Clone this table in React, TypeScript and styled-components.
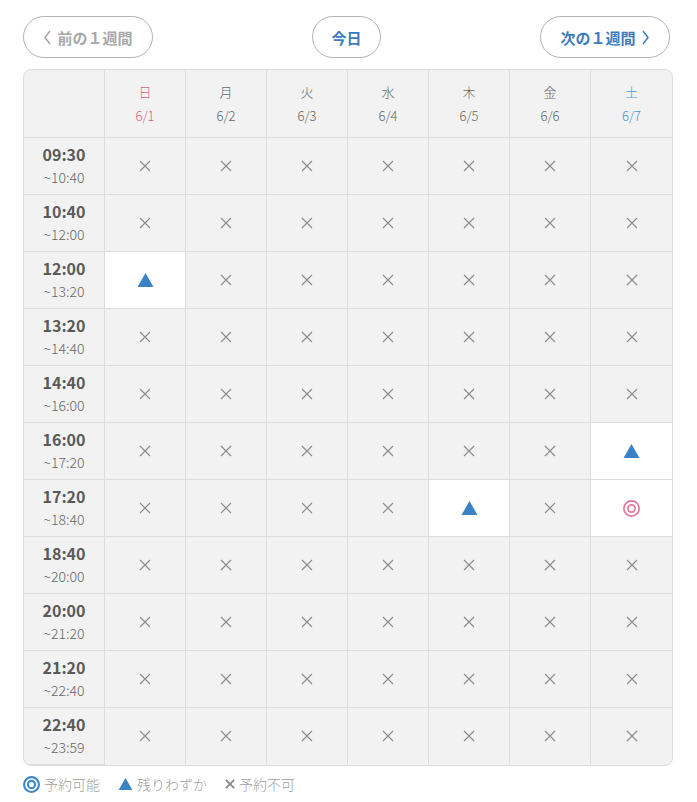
import { createGlobalStyle } from 'styled-components';
import styled from 'styled-components';

export default App;

type Status = 'ok' | 'few' | 'none';

type Day = { name: string; date: string; tone?: 'sun' | 'sat' };

const days: Day[] = [
   { name: '日', date: '6/1', tone: 'sun' },
   { name: '月', date: '6/2' },
   { name: '火', date: '6/3' },
   { name: '水', date: '6/4' },
   { name: '木', date: '6/5' },
   { name: '金', date: '6/6' },
   { name: '土', date: '6/7', tone: 'sat' },
];

const slots: [string, string][] = [
   ['09:30', '~10:40'],
   ['10:40', '~12:00'],
   ['12:00', '~13:20'],
   ['13:20', '~14:40'],
   ['14:40', '~16:00'],
   ['16:00', '~17:20'],
   ['17:20', '~18:40'],
   ['18:40', '~20:00'],
   ['20:00', '~21:20'],
   ['21:20', '~22:40'],
   ['22:40', '~23:59'],
];

// "row-day" -> status (everything else is full)
const open: Record<string, Status> = {
   '2-0': 'few',
   '5-6': 'few',
   '6-4': 'few',
   '6-6': 'ok',
};

function App() {
   return (
      <Page>
         <GlobalStyle />
         <Toolbar>
            <NavButton $muted>
               <Chevron dir='left' />
               前の１週間
            </NavButton>
            <TodayButton>今日</TodayButton>
            <NavButton>
               次の１週間
               <Chevron dir='right' />
            </NavButton>
         </Toolbar>

         <Table>
            <HeadCell />
            {days.map((d) => (
               <HeadCell key={d.date} $tone={d.tone}>
                  <span>{d.name}</span>
                  <span>{d.date}</span>
               </HeadCell>
            ))}
            {slots.map(([start, end], r) => (
               <Row key={start}>
                  <TimeCell>
                     <strong>{start}</strong>
                     <span>{end}</span>
                  </TimeCell>
                  {days.map((d, c) => {
                     const status = open[`${r}-${c}`] ?? 'none';
                     return (
                        <SlotCell key={d.date} $open={status !== 'none'}>
                           <Mark status={status} />
                        </SlotCell>
                     );
                  })}
               </Row>
            ))}
         </Table>

         <Legend>
            <LegendItem>
               <DoubleCircle color='#3f86c8' size={17} width={2} />
               予約可能
            </LegendItem>
            <LegendItem>
               <Triangle color='#3a82c4' size={15} />
               残りわずか
            </LegendItem>
            <LegendItem>
               <Cross color='#888' size={10} width={2.2} />
               予約不可
            </LegendItem>
         </Legend>
      </Page>
   );
}

const Mark = ({ status }: { status: Status }) => {
   if (status === 'ok') return <DoubleCircle color='#e4789c' size={17} width={1.6} />;
   if (status === 'few') return <Triangle color='#3a82c4' size={17} />;
   return <Cross color='#8a8a8a' size={12} width={1.1} />;
};

const Cross = ({ color, size, width }: { color: string; size: number; width: number }) => (
   <svg width={size} height={size} viewBox='0 0 12 12'>
      <path d='M1 1L11 11M11 1L1 11' stroke={color} strokeWidth={width} fill='none' />
   </svg>
);

const Triangle = ({ color, size }: { color: string; size: number }) => (
   <svg width={size} height={size * 0.85} viewBox='0 0 16 14'>
      <path d='M8 0L16 14H0Z' fill={color} />
   </svg>
);

const DoubleCircle = ({ color, size, width }: { color: string; size: number; width: number }) => (
   <svg width={size} height={size} viewBox='0 0 16 16'>
      <circle cx='8' cy='8' r={8 - width / 2} stroke={color} strokeWidth={width} fill='none' />
      <circle cx='8' cy='8' r='3.4' stroke={color} strokeWidth={width} fill='none' />
   </svg>
);

const Chevron = ({ dir }: { dir: 'left' | 'right' }) => (
   <svg width='9' height='15' viewBox='0 0 9 15'>
      <path
         d={dir === 'left' ? 'M7 1L2 7.5L7 14' : 'M2 1L7 7.5L2 14'}
         stroke='currentColor'
         strokeWidth='1.5'
         fill='none'
      />
   </svg>
);

const GlobalStyle = createGlobalStyle`
   body {
      margin: 0;
      background: #fff;
      font-family: 'Noto Sans CJK JP', 'Noto Sans', sans-serif;
      color: #555;
   }
`;

const Page = styled.div`
   width: 650px;
   padding: 16px 0 0 23px;
`;

const Toolbar = styled.div`
   width: 647px;
   display: flex;
   justify-content: space-between;
   align-items: center;
   margin-bottom: 11px;
`;

const PillButton = styled.button`
   height: 42px;
   border: 1px solid #b4b4b4;
   border-radius: 21px;
   background: #fff;
   font-family: inherit;
   font-size: 15px;
   font-weight: bold;
   display: flex;
   align-items: center;
   justify-content: center;
   gap: 5px;
   padding: 0;
`;

const NavButton = styled(PillButton)<{ $muted?: boolean }>`
   width: 130px;
   color: ${(p) => (p.$muted ? '#a8a8a8' : '#3a7cbd')};
`;

const TodayButton = styled(PillButton)`
   width: 69px;
   color: #3a7cbd;
`;

const Table = styled.div`
   display: grid;
   grid-template-columns: repeat(8, 1fr);
   border: 1px solid #dcdcdc;
   border-radius: 8px;
   overflow: hidden;
   background: #f2f2f2;
`;

const Row = styled.div`
   display: contents;
`;

const Cell = styled.div`
   border-right: 1px solid #dcdcdc;
   border-bottom: 1px solid #dcdcdc;
   display: flex;
   flex-direction: column;
   align-items: center;
   justify-content: center;

   &:nth-child(8n) {
      border-right: none;
   }
`;

const HeadCell = styled(Cell)<{ $tone?: 'sun' | 'sat' }>`
   height: 67px;
   font-size: 13px;
   font-weight: 300;
   line-height: 24px;
   color: ${(p) => (p.$tone === 'sun' ? '#d4647e' : p.$tone === 'sat' ? '#4a95d3' : '#666')};
`;

const TimeCell = styled(Cell)`
   height: 56px;
   line-height: 23px;

   strong {
      font-size: 16px;
      color: #5a5a5a;
   }

   span {
      font-size: 14px;
      font-weight: 300;
      color: #666;
   }
`;

const SlotCell = styled(Cell)<{ $open: boolean }>`
   height: 56px;
   background: ${(p) => (p.$open ? '#fff' : 'transparent')};

   ${Row}:last-child & {
      border-bottom: none;
   }

   &:last-child {
      border-right: none;
   }
`;

const Legend = styled.div`
   display: flex;
   gap: 18px;
   margin-top: 8px;
   font-size: 14px;
   font-weight: 300;
   color: #a0a0a0;
`;

const LegendItem = styled.span`
   display: flex;
   align-items: center;
   gap: 4px;
`;
